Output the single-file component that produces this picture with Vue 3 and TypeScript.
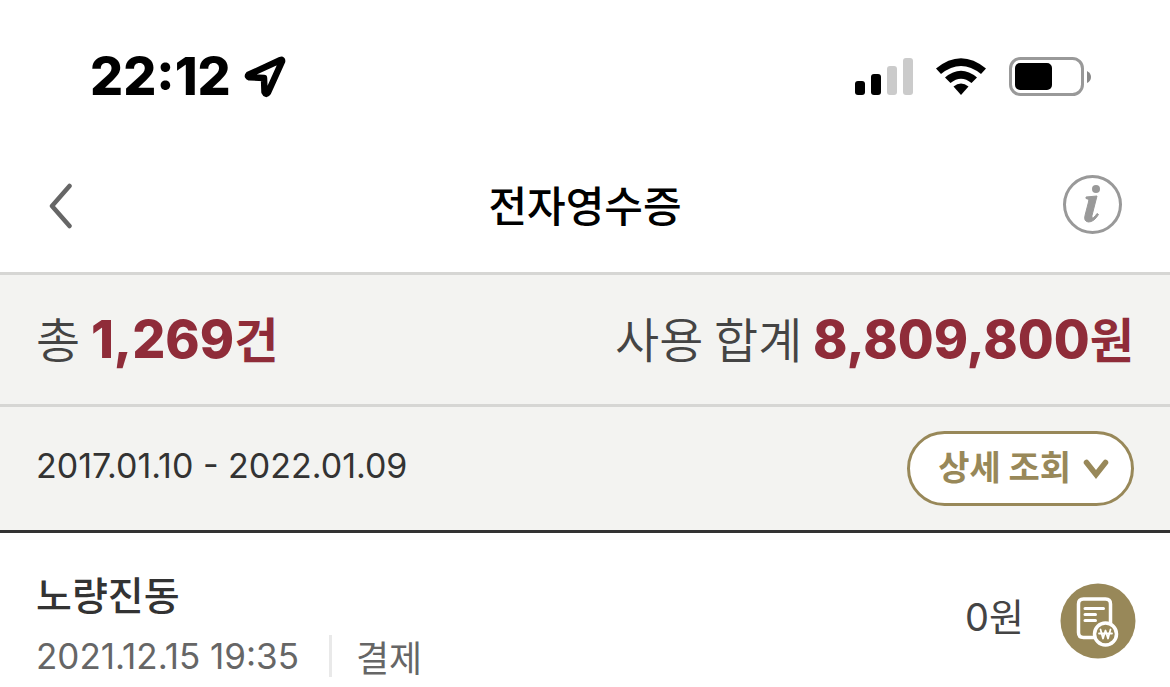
<script setup lang="ts">
interface Receipt {
  id: number
  store: string
  date: string
  kind: string
  amount: string
}

const title = '전자영수증'
const summary = { count: '1,269', total: '8,809,800' }
const period = '2017.01.10 - 2022.01.09'
const receipts: Receipt[] = [
  { id: 1, store: '노량진동', date: '2021.12.15 19:35', kind: '결제', amount: '0' },
]
</script>

<template>
  <div class="screen">
    <div class="status">
      <div class="clock">
        <span>22:12</span>
        <svg class="location" width="44" height="44" viewBox="0 0 44 44" aria-hidden="true">
          <path d="M37.500 5 L5.500 19.800 Q4 21.500 6.500 22.300 L21 23 L21.500 37 Q23 40.500 25 37.500 L39 6.500 Q39.500 4.300 37.500 5 Z" fill="none" stroke="#000" stroke-width="6.500" stroke-linejoin="round" />
        </svg>
      </div>
      <div class="indicators">
        <svg width="60" height="40" viewBox="0 0 60 40" aria-hidden="true">
          <rect x="1" y="24" width="10" height="14" rx="3" />
          <rect x="17" y="17" width="10" height="21" rx="3" />
          <rect x="33" y="9" width="10" height="29" rx="3" fill="#cbcbcb" />
          <rect x="49" y="1" width="10" height="37" rx="3" fill="#cbcbcb" />
        </svg>
        <svg class="wifi" width="52" height="40" viewBox="0 0 52 40" aria-hidden="true">
          <path d="M1 11.500 Q26 -9 51 11.500 L46 17 Q26 1 6 17 Z" />
          <path d="M10 20.500 Q26 7 42 20.500 L36.500 26 Q26 17.500 15.500 26 Z" />
          <path d="M18.500 29.500 Q26 23.500 33.500 29.500 L26 38 Z" />
        </svg>
        <svg class="battery" width="84" height="40" viewBox="0 0 84 40" aria-hidden="true">
          <rect x="2.500" y="1.500" width="72" height="36" rx="10" fill="none" stroke="#999" stroke-width="3" />
          <rect x="7" y="6" width="37" height="27" rx="5" />
          <path d="M79 14 Q83 16 83 20 Q83 24 79 26 Z" fill="#888" />
        </svg>
      </div>
    </div>

    <header class="nav">
      <button class="icon-button" type="button" aria-label="뒤로">
        <svg width="24" height="50" viewBox="0 0 24 50" aria-hidden="true">
          <path d="M21.500 7 L4 27 L21.500 47" fill="none" stroke="#666" stroke-width="4.500" stroke-linecap="round" stroke-linejoin="round" />
        </svg>
      </button>
      <h1>{{ title }}</h1>
      <button class="icon-button" type="button" aria-label="안내">
        <svg width="60" height="60" viewBox="0 0 60 60" aria-hidden="true">
          <circle cx="30.500" cy="30.500" r="28" fill="none" stroke="#999" stroke-width="3" />
          <circle cx="34" cy="15" r="4" fill="#999" />
          <path d="M24 23 L35 22 L30 41.500 Q29.500 45 31.500 43.500 Q33.500 42 35 39.500 L36.500 40.500 Q32 48 26.500 48 Q21.500 47.500 23 41.500 L26.500 28 Q27.500 25 24 24.500 Z" fill="#999" stroke="#999" stroke-width="1" stroke-linejoin="round" />
        </svg>
      </button>
    </header>

    <section class="summary">
      <p>총 <strong><span class="num">{{ summary.count }}</span>건</strong></p>
      <p>사용 합계 <strong><span class="num">{{ summary.total }}</span>원</strong></p>
    </section>

    <section class="filter">
      <p class="period">{{ period }}</p>
      <button class="detail" type="button">
        <span>상세 조회</span>
        <svg width="26" height="20" viewBox="0 0 26 20" aria-hidden="true">
          <path d="M3.500 3.500 L13 15.500 L22.500 3.500" fill="none" stroke="#988859" stroke-width="5.500" stroke-linecap="round" />
        </svg>
      </button>
    </section>

    <ul class="list">
      <li v-for="item in receipts" :key="item.id" class="receipt">
        <div class="info">
          <h2>{{ item.store }}</h2>
          <p class="meta"><span class="date">{{ item.date }}</span><span class="kind">{{ item.kind }}</span></p>
        </div>
        <p class="amount"><span class="digits">{{ item.amount }}</span>원</p>
        <button class="icon-button" type="button" aria-label="영수증 보기">
          <svg width="76" height="76" viewBox="0 0 76 76" aria-hidden="true">
            <circle cx="38" cy="38" r="37.500" fill="#988859" />
            <g fill="none" stroke="#fff" stroke-width="3.500" stroke-linecap="round" stroke-linejoin="round">
              <path d="M34 54.500 H23.500 Q18.500 54.500 18.500 49.500 V21 Q18.500 16 23.500 16 H45.500 Q50.500 16 50.500 21 V40" />
              <path d="M25 25.500 H43.500 M25 31.500 H35.500 M25 37.500 H35.500" stroke-width="3" />
              <circle cx="45.500" cy="51" r="11" fill="#988859" />
              <path d="M40.500 46.500 L43 55.500 L45.500 47.500 L48 55.500 L50.500 46.500 M39 50.500 H52" stroke-width="1.800" />
            </g>
          </svg>
        </button>
      </li>
    </ul>
  </div>
</template>

<style>
body {
  margin: 0;
  background: #fff;
}
</style>

<style scoped>
.screen {
  font-family: "Noto Sans CJK KR", sans-serif;
  color: #444;
}
h1,
h2,
p,
ul {
  margin: 0;
  padding: 0;
}
button {
  font: inherit;
  cursor: pointer;
}
.status {
  display: flex;
  align-items: center;
  justify-content: space-between;
  height: 136px;
  padding: 18px 78px 0 90px;
  box-sizing: border-box;
}
.status > div {
  display: flex;
  align-items: center;
}
.clock {
  gap: 12px;
  font: 800 52px/60px Inter, sans-serif;
  color: #000;
}
.indicators {
  gap: 21px;
}
.nav {
  display: flex;
  align-items: center;
  justify-content: space-between;
  height: 136px;
  padding: 0 48px;
  box-sizing: border-box;
}
.icon-button {
  display: flex;
  padding: 0;
  border: 0;
  background: none;
}
.nav .icon-button {
  width: 60px;
}
.nav .icon-button:last-child {
  justify-content: flex-end;
}
h1 {
  font-size: 42px;
  line-height: 60px;
  font-weight: 500;
  color: #000;
}
.summary {
  display: flex;
  align-items: center;
  justify-content: space-between;
  height: 135px;
  padding: 0 36px 2px;
  box-sizing: border-box;
  background: #f3f3f1;
  border-top: 3px solid #d6d6d4;
  border-bottom: 3px solid #d6d6d4;
  font-size: 48px;
  line-height: 64px;
  font-weight: 350;
}
.summary strong {
  font-weight: 700;
  color: #8f2c39;
}
.num {
  font-family: Inter, sans-serif;
  font-weight: 800;
  font-size: 52px;
}
.filter {
  display: flex;
  align-items: center;
  justify-content: space-between;
  height: 126px;
  padding: 0 36px;
  box-sizing: border-box;
  background: #f3f3f1;
  border-bottom: 3px solid #333;
  color: #333;
}
.period {
  padding-bottom: 6px;
  font: 400 34px/48px Inter, sans-serif;
}
.detail {
  display: flex;
  align-items: center;
  gap: 12px;
  height: 75px;
  padding: 0 22px 0 28px;
  border: 3px solid #988859;
  border-radius: 38px;
  background: #fff;
  font: 700 34px/48px "Noto Sans CJK KR", sans-serif;
  color: #988859;
}
.detail span {
  padding-bottom: 6px;
}
.list {
  list-style: none;
}
.receipt {
  display: flex;
  align-items: center;
  gap: 36px;
  padding: 32px 34px 4px 36px;
}
.info {
  flex: 1;
}
h2 {
  font-size: 39px;
  line-height: 56px;
  font-weight: 500;
  color: #333;
}
.meta {
  display: flex;
  align-items: center;
  margin-top: 14px;
  font-size: 36px;
  line-height: 42px;
  color: #666;
}
.date {
  font-family: Inter, sans-serif;
  font-size: 35px;
  font-weight: 400;
}
.kind {
  margin-left: 30px;
  padding-left: 24px;
  border-left: 3px solid #e9e9e9;
}
.amount {
  padding-bottom: 10px;
  font-size: 38px;
  line-height: 56px;
}
.digits {
  font-family: Inter, sans-serif;
}
</style>
